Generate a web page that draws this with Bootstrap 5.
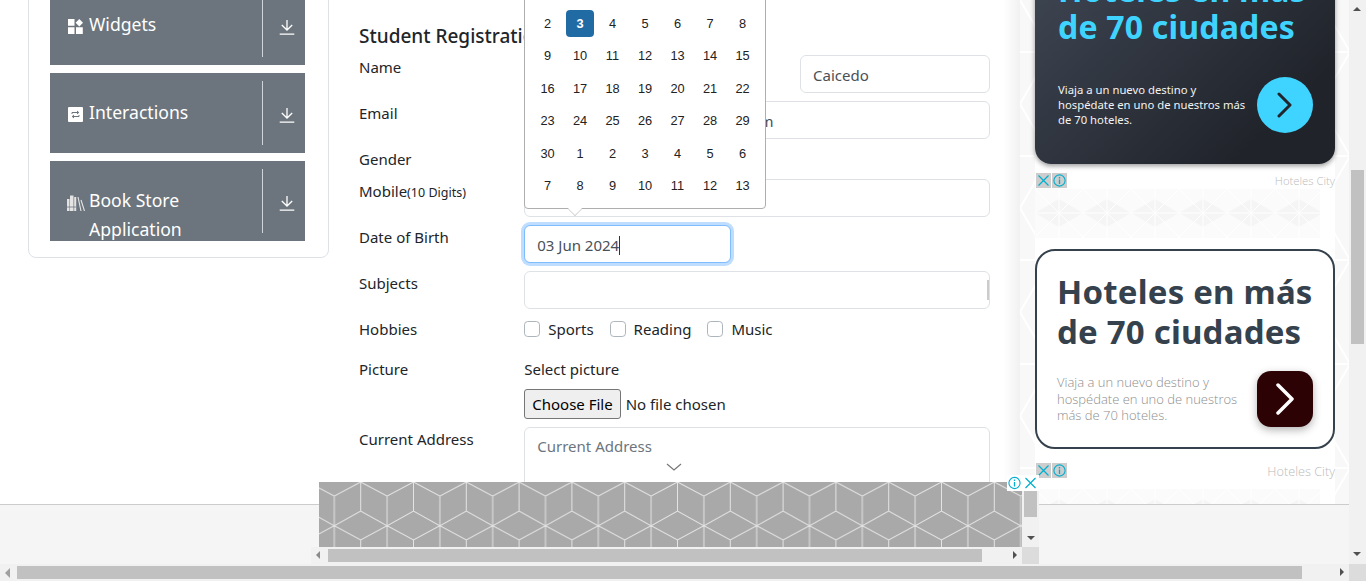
<!DOCTYPE html>
<html lang="en">
<head>
    <meta charset="UTF-8">
    <meta name="viewport" content="width=device-width, initial-scale=1.0">
    <title>Student Registration Form</title>
    <link rel="stylesheet" href="https://cdn.jsdelivr.net/npm/bootstrap@5.3.0/dist/css/bootstrap.min.css">
    <style>
        html, body { height: 581px; overflow: hidden; }
        body { font-family: "Noto Sans", sans-serif; font-size: 15px; line-height: 24px; color: #212529; background: #fff; position: relative; }

        /* page columns */
        .page-cols { height: 581px; width: 1349px; }
        .side-col { width: 344px; padding: 0 15px 0 28px; flex: none; }
        .form-col { width: 676px; padding: 0 30px 0 15px; flex: none; background: linear-gradient(90deg, #fff 97.5%, #f1f1f1); }
        .ad-col { width: 329px; flex: none; position: relative; padding: 0 14px 0 15px; }

        /* left menu */
        .menu-box { margin-top: -26px; border: 1px solid #dee2e6; border-radius: 8px; padding: 10px 23px 16px 21px; height: 284px; }
        .menu-panel { background: #6c757d; color: #fff; height: 80px; margin-bottom: 8px; overflow: hidden; display: flex; font-size: 17.6px; line-height: 29px; }
        .menu-panel:last-child { margin-bottom: 0; }
        .menu-name { width: 212px; padding: 25px 0 0 18px; display: flex; gap: 6px; }
        .menu-ico { width: 15px; height: 15px; flex: none; margin-top: 9px; }
        .menu-ico-books { width: 18px; height: 17px; margin: 8px -2px 0 -1px; }
        .menu-toggle { flex: 1; margin: 8px 0; border-left: 1px solid #ced4da; display: flex; align-items: center; justify-content: center; padding: 4px 0 0 5px; }

        /* form */
        .form-title { font-size: 19px; line-height: 24px; font-weight: 500; margin: 24px 0 7px; }
        .form-rowx { --bs-gutter-x: 30px; margin-bottom: 8px; }
        .form-rowx .form-control { height: 38px; font-size: 15px; color: #495057; padding-top: 8px; padding-bottom: 6px; }
        .form-rowx textarea.form-control { height: 112px; padding-top: 7px; }
        .form-rowx .form-control::placeholder { color: #6c757d; }
        .mobile-hint { font-size: 12.5px; }
        .first-name { width: 230px; flex: none; }
        .last-name { width: 190px; flex: none; }
        .subject-wrap { position: relative; }
        .subject-wrap::after { content: ""; position: absolute; right: 1px; top: 9px; width: 2px; height: 20px; background: #ccc; }
        .dob-wrap { position: relative; width: 207px; }
        .dob-input.form-control { border-color: #80bdff; box-shadow: 0 0 0 3px rgba(0,123,255,.25); }
        .caret-bar { display: inline-block; width: 1px; height: 19px; background: #333; vertical-align: -4px; }
        .hobby-row { height: 32px; }
        .hobby-row .form-check-input { width: 16px; height: 16px; margin-top: 4px; margin-left: -24px; border-color: #adb5bd; }
        .hobby-row .form-check { padding-left: 24px; margin-right: 16px; min-height: 24px; margin-bottom: 0; }
        .file-row { gap: 5px; }
        .file-btn { height: 30px; font-size: 15px; line-height: 26px; padding: 0 7px; background: #efefef; border: 1px solid #767676; border-radius: 3px; color: #000; }

        /* date picker */
        .date-pop { position: absolute; left: 0; bottom: 54px; width: 242px; background: #fff; border: 1px solid #aeaeae; border-radius: 4px; z-index: 5; font-family: "Liberation Sans", sans-serif; font-size: 12.8px; color: #222; padding: 40px 0 6px; }
        .date-pop::after { content: ""; position: absolute; left: 43px; bottom: -8px; width: 14px; height: 14px; background: #fff; border: solid #d0d0d0; border-width: 0 1px 1px 0; transform: rotate(45deg) scale(.72); }
        .pop-week { display: flex; padding: 0 6px; }
        .pop-day { width: 27.2px; height: 27.2px; margin: 2.66px; line-height: 27.2px; text-align: center; border-radius: 4px; flex: none; }
        .pop-day.is-picked { background: #216ba5; color: #fff; font-weight: 700; }

        /* right ad column */
        .ad-tex { position: absolute; inset: 0; width: 100%; height: 100%; }
        .ad-stack { position: relative; background: #fff; margin-top: -36px; }
        .hotel-ad { height: 200px; display: flex; flex-direction: column; justify-content: space-between; }
        .hotel-dark { border-radius: 16px; background: linear-gradient(135deg, #3f4754, #20232a 80%); box-shadow: 0 2px 5px rgba(0,0,0,.4); color: #fff; padding: 6.5px 22px 31px 23px; }
        .hotel-light { border: 2px solid #35424d; border-radius: 20px; padding: 21px 20px 20px 20px; color: #35424d; }
        .hotel-title { font-size: 33px; line-height: 40px; font-weight: 700; letter-spacing: .2px; }
        .hotel-dark .hotel-title { font-size: 32px; line-height: 37px; color: #3fd4ff; }
        .hotel-foot { display: flex; align-items: center; justify-content: space-between; }
        .hotel-dark .hotel-desc { font-size: 11.3px; line-height: 15px; color: #f2f2f2; margin-top: -2px; }
        .hotel-light .hotel-desc { font-size: 13px; line-height: 16.5px; width: 190px; color: #8e8e8e; font-family: "Open Sans", sans-serif; font-weight: 300; }
        .hotel-go { width: 56px; height: 56px; flex: none; display: flex; align-items: center; justify-content: center; }
        .hotel-dark .hotel-go { background: #3fd4ff; border-radius: 50%; }
        .hotel-light .hotel-go { background: #2d0204; border-radius: 14px; box-shadow: 0 3px 8px rgba(0,0,0,.3); }
        .ad-meta { display: flex; align-items: center; justify-content: space-between; height: 25px; padding: 8px 0 0 1px; font-size: 11.3px; font-weight: 300; color: #bbb; line-height: 16px; font-family: "Open Sans", sans-serif; }
        .ad-meta-big { height: 40px; padding-top: 3px; font-size: 12.7px; }
        .ad-btns { display: flex; gap: 1px; }
        .ad-btn { width: 15px; height: 15px; background: #cdcdcd; display: block; }
        .ad-strip { height: 49px; width: 285px; overflow: hidden; background: #fbfbfb; }
        .ad-strip svg { width: 100%; height: 100%; display: block; }
        .ad-gap { height: 11px; }

        /* bottom anchor ad, it lies over the page */
        .anchor-band { position: absolute; left: 0; right: 17px; top: 504px; height: 61px; background: #f5f5f5; border-top: 1px solid #ccc; z-index: 8; }
        .anchor-frame { position: absolute; left: 319px; top: 482px; width: 720px; height: 82px; z-index: 9; display: grid; grid-template-columns: 703px 17px; grid-template-rows: 65px 17px; }
        .anchor-art { display: block; width: 703px; height: 65px; }
        .frame-v { background: #f1f1f1; position: relative; }
        .frame-v-thumb { position: absolute; left: 2px; top: 9px; width: 13px; height: 26px; background: #c1c1c1; }
        .frame-h { background: #f1f1f1; position: relative; margin-left: -8px; }
        .frame-h-thumb { position: absolute; left: 17px; top: 2px; width: 654px; height: 13px; background: #c1c1c1; }
        .frame-corner { background: #dcdcdc; }
        .anchor-close { position: absolute; left: 1007px; top: 475px; width: 32px; height: 16px; background: #fff; z-index: 10; display: flex; gap: 1px; }
        .anchor-close svg { width: 15px; height: 16px; display: block; }
        .anchor-handle { position: absolute; left: 666px; top: 463px; z-index: 7; display: block; }

        /* browser scrollbars */
        .bar-v { position: absolute; right: 0; top: 0; width: 17px; height: 564px; background: #f1f1f1; z-index: 11; }
        .bar-v-thumb { position: absolute; left: 2px; top: 170px; width: 13px; height: 174px; background: #c1c1c1; }
        .bar-h { position: absolute; left: 0; right: 17px; bottom: 0; height: 17px; background: #f1f1f1; z-index: 11; }
        .bar-h-thumb { position: absolute; left: 17px; top: 2px; right: 47px; height: 13px; background: #c1c1c1; }
        .bar-corner { position: absolute; right: 0; bottom: 0; width: 17px; height: 17px; background: #dcdcdc; z-index: 11; }
        .tri { position: absolute; width: 0; height: 0; border: 4px solid transparent; }
        .tri-up { border-bottom-color: #505050; border-top: 0; }
        .tri-down { border-top-color: #505050; border-bottom: 0; }
        .tri-left { border-right-color: #505050; border-left: 0; }
        .tri-right { border-left-color: #505050; border-right: 0; }
        .frame-v .tri-down { left: 5px; top: 54px; }
        .frame-h .tri-left { left: 5px; top: 4px; border-right-color: #8a8a8a; }
        .frame-h .tri-right { right: 5px; top: 4px; }
        .bar-v .tri-up { left: 4px; top: 7px; }
        .bar-v .tri-down { left: 4px; top: 552px; }
        .bar-h .tri-left { left: 5px; top: 4px; border-right-color: #a0a0a0; border-width: 5px 5px 5px 0; }
        .bar-h .tri-right { right: 5px; top: 4px; }
    </style>
</head>
<body>
    <svg width="0" height="0" class="position-absolute">
        <defs>
            <symbol id="ico-down" viewBox="0 0 16 16"><path d="M8 1v9.500M2.800 6 8 11l5.200-5M.7 15.200h14.600" fill="none" stroke="#fff" stroke-width="1.300"/></symbol>
            <symbol id="ico-x" viewBox="0 0 15 15"><path d="M2.500 2.500l10 10M12.500 2.500l-10 10" fill="none" stroke="#00aecd" stroke-width="1.200"/></symbol>
            <symbol id="ico-i" viewBox="0 0 15 15"><circle cx="7.500" cy="7.500" r="5.600" fill="none" stroke="#00aecd" stroke-width="1.100"/><path d="M7.500 6.500v4.500M7.500 4v1.500" stroke="#00aecd" stroke-width="1.300"/></symbol>
        </defs>
    </svg>

    <div class="page-cols d-flex">
        <div class="side-col">
            <div class="menu-box">
                <div class="menu-panel">
                    <div class="menu-name">
                        <svg class="menu-ico" viewBox="0 0 15 15"><path d="M0 0h6.500v6.800H0zM0 8.300h6.500V15H0zM8 8.300h6.800V15H8zM11.300 0l3.700 3.700-3.700 3.700-3.700-3.700z" fill="#fff"/></svg>
                        <span>Widgets</span>
                    </div>
                    <div class="menu-toggle"><svg width="16" height="16"><use href="#ico-down"/></svg></div>
                </div>
                <div class="menu-panel">
                    <div class="menu-name">
                        <svg class="menu-ico" viewBox="0 0 15 15"><rect width="15" height="15" rx="1" fill="#fff"/><path d="M4 7V5.500h6.500M9 4l1.800 1.500L9 7M11 8v1.500H4.500M6 8 4.200 9.500 6 11" fill="none" stroke="#6c757d" stroke-width="1"/></svg>
                        <span>Interactions</span>
                    </div>
                    <div class="menu-toggle"><svg width="16" height="16"><use href="#ico-down"/></svg></div>
                </div>
                <div class="menu-panel">
                    <div class="menu-name">
                        <svg class="menu-ico menu-ico-books" viewBox="0 0 18 17"><path d="M0 5h2.500v12H0zM3 1.500h3.500V17H3zM7.200 3h2v14h-2z" fill="#e4e4e4"/><path d="M11 3l3 14M14 6l3.500 11" fill="none" stroke="#e4e4e4" stroke-width="1.100"/><path d="M0 13h9.200" stroke="#6c757d" stroke-width=".8"/></svg>
                        <span>Book Store Application</span>
                    </div>
                    <div class="menu-toggle"><svg width="16" height="16"><use href="#ico-down"/></svg></div>
                </div>
            </div>
        </div>

        <div class="form-col">
            <h5 class="form-title">Student Registration Form</h5>
            <form>
                <div class="row form-rowx">
                    <div class="col-3">Name</div>
                    <div class="col-9 d-flex justify-content-between">
                        <input class="form-control first-name" value="Carlos">
                        <input class="form-control last-name" value="Caicedo">
                    </div>
                </div>
                <div class="row form-rowx">
                    <div class="col-3">Email</div>
                    <div class="col-9"><input class="form-control" value="carlos.caicedo.dev.24@gmail.com"></div>
                </div>
                <div class="row form-rowx">
                    <div class="col-3">Gender</div>
                    <div class="col-9"></div>
                </div>
                <div class="row form-rowx">
                    <div class="col-3">Mobile<span class="mobile-hint">(10 Digits)</span></div>
                    <div class="col-9"><input class="form-control"></div>
                </div>
                <div class="row form-rowx">
                    <div class="col-3">Date of Birth</div>
                    <div class="col-9">
                        <div class="dob-wrap">
                            <div class="form-control dob-input d-flex align-items-center">03 Jun 2024<span class="caret-bar"></span></div>
                            <div class="date-pop"><div id="dayRows"></div></div>
                        </div>
                    </div>
                </div>
                <div class="row form-rowx">
                    <div class="col-3">Subjects</div>
                    <div class="col-9"><div class="subject-wrap"><input class="form-control"></div></div>
                </div>
                <div class="row form-rowx hobby-row">
                    <div class="col-3">Hobbies</div>
                    <div class="col-9 d-flex">
                        <div class="form-check"><input class="form-check-input" type="checkbox" id="h1"><label class="form-check-label" for="h1">Sports</label></div>
                        <div class="form-check"><input class="form-check-input" type="checkbox" id="h2"><label class="form-check-label" for="h2">Reading</label></div>
                        <div class="form-check"><input class="form-check-input" type="checkbox" id="h3"><label class="form-check-label" for="h3">Music</label></div>
                    </div>
                </div>
                <div class="row form-rowx">
                    <div class="col-3">Picture</div>
                    <div class="col-9">
                        <div class="mb-2">Select picture</div>
                        <div class="d-flex align-items-center file-row"><button type="button" class="file-btn">Choose File</button><span>No file chosen</span></div>
                    </div>
                </div>
                <div class="row form-rowx">
                    <div class="col-3">Current Address</div>
                    <div class="col-9"><textarea class="form-control" placeholder="Current Address"></textarea></div>
                </div>
            </form>
        </div>

        <div class="ad-col">
            <svg class="ad-tex">
                <defs>
                    <pattern id="texLight" width="60" height="104" patternUnits="userSpaceOnUse">
                        <path d="M0 0l60 104M60 0 0 104M30 0v104M0 52h60" stroke="#fff" stroke-width="2" fill="none"/>
                    </pattern>
                    <pattern id="texStrip" width="48" height="48" patternUnits="userSpaceOnUse">
                        <path d="M0 24 24 10v28zM48 24 24 10v28z" fill="#f5f5f5"/>
                        <path d="M0 0l48 48M48 0 0 48M24 0v48M0 24h48" stroke="#fff" fill="none"/>
                    </pattern>
                </defs>
                <rect width="100%" height="100%" fill="#f8f8f8"/>
                <rect width="100%" height="100%" fill="url(#texLight)"/>
            </svg>
            <div class="ad-stack">
                <div class="hotel-ad hotel-dark">
                    <div class="hotel-title">Hoteles en más<br>de 70 ciudades</div>
                    <div class="hotel-foot">
                        <div class="hotel-desc">Viaja a un nuevo destino y<br>hospédate en uno de nuestros más<br>de 70 hoteles.</div>
                        <div class="hotel-go"><svg width="16" height="26" viewBox="0 0 16 26"><path d="M2 2l11 11L2 24" fill="none" stroke="#22252c" stroke-width="3" stroke-linecap="round" stroke-linejoin="round"/></svg></div>
                    </div>
                </div>
                <div class="ad-meta">
                    <div class="ad-btns"><svg class="ad-btn"><use href="#ico-x"/></svg><svg class="ad-btn"><use href="#ico-i"/></svg></div>
                    <span>Hoteles City</span>
                </div>
                <div class="ad-strip"><svg><rect width="100%" height="100%" fill="url(#texStrip)"/></svg></div>
                <div class="ad-gap"></div>
                <div class="hotel-ad hotel-light">
                    <div class="hotel-title">Hoteles en más<br>de 70 ciudades</div>
                    <div class="hotel-foot">
                        <div class="hotel-desc">Viaja a un nuevo destino y hospédate en uno de nuestros más de 70 hoteles.</div>
                        <div class="hotel-go"><svg width="20" height="32" viewBox="0 0 20 32"><path d="M3 2l14 14L3 30" fill="none" stroke="#fff" stroke-width="3.500" stroke-linecap="round" stroke-linejoin="round"/></svg></div>
                    </div>
                </div>
                <div class="ad-meta ad-meta-big">
                    <div class="ad-btns"><svg class="ad-btn"><use href="#ico-x"/></svg><svg class="ad-btn"><use href="#ico-i"/></svg></div>
                    <span>Hoteles City</span>
                </div>
                <div class="ad-strip"><svg><rect width="100%" height="100%" fill="url(#texStrip)"/></svg></div>
            </div>
        </div>
    </div>

    <svg class="anchor-handle" width="16" height="8" viewBox="0 0 16 8"><path d="M1 1l7 6 7-6" fill="none" stroke="#777" stroke-width="1.200"/></svg>
    <div class="anchor-band"></div>
    <div class="anchor-frame">
        <svg class="anchor-art">
            <defs>
                <pattern id="cubes" x="15.300" y="0" width="52.800" height="65" patternUnits="userSpaceOnUse">
                    <path d="M0 14 26.400 0l26.400 14M0 14v51M52.800 14v51M26.400 0v29M0 43.700 26.400 29l26.400 14.700M0 43.700 26.400 58l26.400-14.300M26.400 58v7" fill="none" stroke="#e4e4e4" stroke-width="1"/>
                </pattern>
            </defs>
            <rect width="100%" height="100%" fill="#a9a9a9"/>
            <rect width="100%" height="100%" fill="url(#cubes)"/>
        </svg>
        <div class="frame-v">
            <div class="frame-v-thumb"></div>
            <span class="tri tri-down"></span>
        </div>
        <div class="frame-h">
            <div class="frame-h-thumb"></div>
            <span class="tri tri-left"></span>
            <span class="tri tri-right"></span>
        </div>
        <div class="frame-corner"></div>
    </div>
    <div class="anchor-close">
        <svg viewBox="0 0 15 16"><use href="#ico-i"/></svg>
        <svg viewBox="0 0 15 16"><use href="#ico-x"/></svg>
    </div>

    <div class="bar-v">
        <span class="tri tri-up"></span>
        <div class="bar-v-thumb"></div>
        <span class="tri tri-down"></span>
    </div>
    <div class="bar-h">
        <span class="tri tri-left"></span>
        <div class="bar-h-thumb"></div>
        <span class="tri tri-right"></span>
    </div>
    <div class="bar-corner"></div>

    <script>
    // June 2024 as the picker shows it, 6 weeks starting on Sunday 2
    const days = [2,3,4,5,6,7,8,9,10,11,12,13,14,15,16,17,18,19,20,21,22,23,24,25,26,27,28,29,30,1,2,3,4,5,6,7,8,9,10,11,12,13];
    let html = '';
    for (let w = 0; w < 6; w++) {
        html += '<div class="pop-week">';
        for (let d = 0; d < 7; d++) {
            const n = w * 7 + d;
            html += '<div class="pop-day' + (n === 1 ? ' is-picked' : '') + '">' + days[n] + '</div>';
        }
        html += '</div>';
    }
    document.getElementById('dayRows').innerHTML = html;
    </script>
    <script src="https://cdn.jsdelivr.net/npm/bootstrap@5.3.0/dist/js/bootstrap.bundle.min.js"></script>
</body>
</html>
